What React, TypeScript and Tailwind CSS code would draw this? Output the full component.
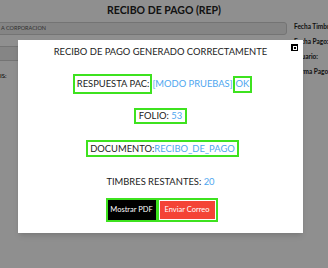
import { type ReactNode } from "react";

function Outlined({ children, className = "" }: { children: ReactNode; className?: string }) {
  return <span className={`inline-flex items-center border-2 border-[#3ee21f] ${className}`}>{children}</span>;
}

export default function App() {
  return (
    <div className="relative h-[268px] w-[328px] overflow-hidden bg-white font-['Lato',sans-serif] text-[#222]">
      {/* page behind the dialog */}
      <div className="flex flex-col">
        <h1 className="pt-[2px] text-center text-[10.5px] font-bold leading-[16px]">RECIBO DE PAGO (REP)</h1>
        <div className="mt-[4px] flex">
          <div className="-ml-[6px] flex w-[293px] shrink-0 flex-col gap-[11px]">
            <div className="flex h-[13px] items-center rounded-[3px] border border-[#cfcfcf] bg-[#eeeeee] pl-[6px] text-[5.5px] text-[#555]">
              A CORPORACION
            </div>
            <div className="h-[15px] rounded-[3px] border border-[#cfcfcf] bg-[#eeeeee]" />
            <div className="pl-[6px] text-[6px] font-semibold leading-[8px]">IS:</div>
          </div>
          <div className="ml-[7px] flex flex-col gap-[7px] whitespace-nowrap pt-[1px] text-[6.5px] font-bold leading-[8px]">
            <span>Fecha Timbrado</span>
            <span>Fecha Pago:</span>
            <span>Usuario:</span>
            <span>Forma Pago:</span>
          </div>
        </div>
      </div>

      {/* overlay */}
      <div className="absolute inset-0 bg-black/[0.44]">
        <div className="relative ml-[18px] mt-[40px] flex w-[285px] flex-col items-center bg-white pb-[11px] pt-[4px] text-[9.4px] leading-[16px] shadow-md">
          <button className="absolute right-[5px] top-[4px] flex h-[7px] w-[7px] items-center justify-center bg-black">
            <span className="flex h-[4px] w-[4px] items-center justify-center bg-white">
              <span className="h-[2px] w-[2px] bg-black" />
            </span>
          </button>

          <p className="h-[16px]">RECIBO DE PAGO GENERADO CORRECTAMENTE</p>

          <div className="mt-[14px] flex h-[20px] items-center pl-[4px]">
            <Outlined className="h-[20px] pl-[2px] pr-[1px]">RESPUESTA PAC:</Outlined>
            <span className="text-[#4ea6ef]">[MODO PRUEBAS]</span>
            <Outlined className="h-[17px] px-[1px] text-[#4ea6ef]">OK</Outlined>
          </div>

          <Outlined className="mt-[14px] h-[16px] px-[3px]">
            FOLIO:&nbsp;<span className="text-[#4ea6ef]">53</span>
          </Outlined>

          <Outlined className="ml-[4px] mt-[16px] h-[17px] px-[2px]">
            DOCUMENTO:<span className="text-[#4ea6ef]">RECIBO_DE_PAGO</span>
          </Outlined>

          <p className="mt-[17px] h-[16px]">
            TIMBRES RESTANTES: <span className="text-[#4ea6ef]">20</span>
          </p>

          <div className="mt-[8px] flex h-[24px] pl-[2px] text-[7.5px] leading-[10px] text-white">
            <span className="flex w-[52px] border-2 border-[#3ee21f]">
              <span className="flex flex-1 items-center justify-center bg-black">Mostrar PDF</span>
            </span>
            <span className="-ml-[1px] flex w-[61px] border-2 border-[#3ee21f] bg-white px-[1px] py-[1px]">
              <span className="flex flex-1 items-center justify-center bg-[#f44336]">Enviar Correo</span>
            </span>
          </div>
        </div>
      </div>
    </div>
  );
}
